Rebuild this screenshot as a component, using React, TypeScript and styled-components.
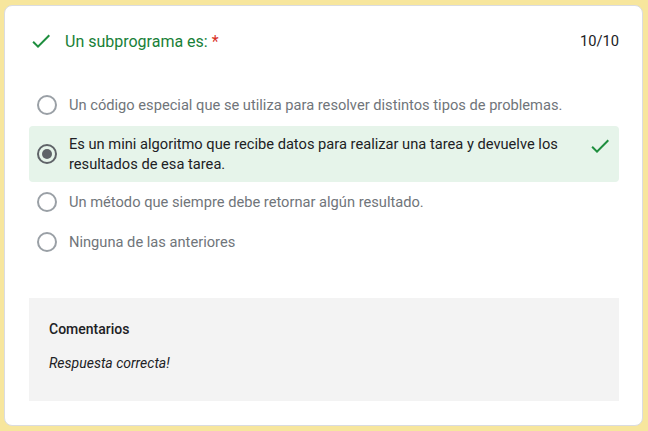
import React from "react";
import styled, { createGlobalStyle } from "styled-components";

const Global = createGlobalStyle`
  html, body { margin: 0; padding: 0; }
  body {
    background: #f7e69d;
    font-family: Roboto, "Noto Sans", Arial, sans-serif;
  }
  #root { padding: 5px 5px 5px 4px; }
`;

const Card = styled.div`
  box-sizing: border-box;
  width: 639px;
  height: 421px;
  background: #fff;
  border: 1px solid #dadce0;
  border-radius: 8px;
  padding: 23px 23px 24px 24px;
  display: flex;
  flex-direction: column;
`;

const Header = styled.div`
  display: flex;
  align-items: center;
  height: 24px;
  margin-bottom: 32px;
`;

const Title = styled.div`
  flex: 1;
  margin-left: 12px;
  font-size: 16px;
  color: #188038;
`;

const Req = styled.span`
  color: #d93025;
  margin-left: 4px;
`;

const Score = styled.div`
  font-size: 14.67px;
  color: #202124;
`;

const Options = styled.div`
  display: flex;
  flex-direction: column;
`;

const Option = styled.div<{ $selected?: boolean }>`
  display: flex;
  align-items: ${(p) => (p.$selected ? "flex-start" : "center")};
  min-height: 40px;
  box-sizing: border-box;
  padding: ${(p) => (p.$selected ? "8px 7px 8px 8px" : "0 7px 0 8px")};
  margin-top: ${(p) => (p.$selected ? "1px" : "0")};
  background: ${(p) => (p.$selected ? "#e6f4ea" : "transparent")};
  border-radius: 4px;
`;

const RadioWrap = styled.div<{ $selected?: boolean }>`
  width: 20px;
  height: 20px;
  flex: none;
  align-self: center;
  box-sizing: border-box;
  border-radius: 50%;
  border: 2px solid ${(p) => (p.$selected ? "#5f6368" : "#9aa0a6")};
  display: flex;
  align-items: center;
  justify-content: center;
`;

const Dot = styled.div`
  width: 10px;
  height: 10px;
  border-radius: 50%;
  background: #5f6368;
`;

const OptionText = styled.div<{ $selected?: boolean }>`
  flex: 1;
  margin-left: 12px;
  font-size: 14.67px;
  line-height: 20px;
  color: ${(p) => (p.$selected ? "#202124" : "#70757a")};
  padding-right: 24px;
`;

const Feedback = styled.div`
  margin-top: 36px;
  background: #f3f3f3;
  height: 104px;
  box-sizing: border-box;
  padding: 21px 20px;
  display: flex;
  flex-direction: column;
  gap: 14px;
`;

const FeedbackTitle = styled.div`
  font-size: 14px;
  line-height: 20px;
  font-weight: 500;
  color: #202124;
`;

const FeedbackText = styled.div`
  font-size: 14px;
  line-height: 20px;
  font-style: italic;
  color: #202124;
`;

const Check = ({ size = 24 }: { size?: number }) => (
  <svg width={size} height={size} viewBox="0 0 24 24" style={{ flex: "none" }}>
    <path fill="#1e8e3e" d="M9 16.17L4.83 12l-1.42 1.41L9 19 21 7l-1.41-1.41z" />
  </svg>
);

const options = [
  "Un código especial que se utiliza para resolver distintos tipos de problemas.",
  "Es un mini algoritmo que recibe datos para realizar una tarea y devuelve los resultados de esa tarea.",
  "Un método que siempre debe retornar algún resultado.",
  "Ninguna de las anteriores",
];

export default function App() {
  return (
    <>
      <Global />
      <Card>
        <Header>
          <Check />
          <Title>
            Un subprograma es:<Req>*</Req>
          </Title>
          <Score>10/10</Score>
        </Header>
        <Options>
          {options.map((o, i) => {
            const sel = i === 1;
            return (
              <Option key={i} $selected={sel}>
                <RadioWrap $selected={sel}>{sel && <Dot />}</RadioWrap>
                <OptionText $selected={sel}>{o}</OptionText>
                {sel && <Check />}
              </Option>
            );
          })}
        </Options>
        <Feedback>
          <FeedbackTitle>Comentarios</FeedbackTitle>
          <FeedbackText>Respuesta correcta!</FeedbackText>
        </Feedback>
      </Card>
    </>
  );
}
